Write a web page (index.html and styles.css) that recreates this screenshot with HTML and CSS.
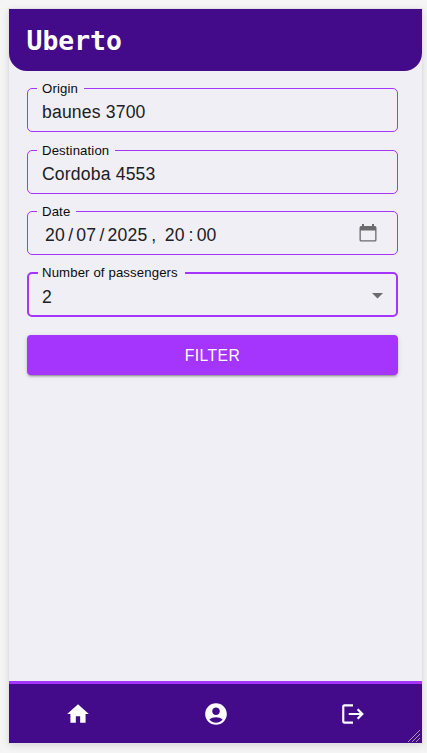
FILE: index.html
```
<!DOCTYPE html>
<html lang="en">
<head>
<meta charset="utf-8">
<title>Uberto</title>
<link rel="stylesheet" href="styles.css">
</head>
<body>
<div class="phone">
  <header class="header"><h1>Uberto</h1></header>
  <main class="form">
    <fieldset class="field"><legend>Origin</legend><div class="value">baunes 3700</div></fieldset>
    <fieldset class="field"><legend>Destination</legend><div class="value">Cordoba 4553</div></fieldset>
    <fieldset class="field">
      <legend>Date</legend>
      <div class="value date">
        <span class="parts"><span>20</span><span class="slash">/</span><span>07</span><span class="slash">/</span><span>2025</span><span class="comma">,</span><span>20</span><span class="colon">:</span><span>00</span></span>
        <svg class="calendar" width="18" height="18" viewBox="0 0 18 18"><path fill="#6b6b6e" fill-rule="evenodd" d="M3 0h2v2h8V0h2v2h1q1.500 0 1.500 2v12q0 1.500-1.500 1.500H2Q.5 17.500.5 16V4Q.5 2 2 2h1zM1.800 6.500v9.700h14.400V6.500z"/></svg>
      </div>
    </fieldset>
    <fieldset class="field focused">
      <legend>Number of passengers</legend>
      <div class="value"><span>2</span><svg class="arrow" width="11" height="6" viewBox="0 0 11 6"><path fill="#6b6b6e" d="M0 0h11L5.500 5.500z"/></svg></div>
    </fieldset>
    <button class="filter">FILTER</button>
  </main>
  <nav class="nav">
    <a><svg width="26" height="26" viewBox="0 0 24 24"><path d="M10 20v-6h4v6h5v-8h3L12 3 2 12h3v8z"/></svg></a>
    <a><svg width="26" height="26" viewBox="0 0 24 24"><path d="M12 2C6.480 2 2 6.480 2 12s4.480 10 10 10 10-4.480 10-10S17.520 2 12 2m0 4c1.930 0 3.500 1.570 3.500 3.500S13.930 13 12 13s-3.500-1.570-3.500-3.500S10.070 6 12 6m0 14c-2.030 0-4.430-.82-6.140-2.880C7.550 15.800 9.680 15 12 15s4.450.8 6.140 2.120C16.430 19.180 14.030 20 12 20"/></svg></a>
    <a><svg width="26" height="26" viewBox="0 0 24 24"><path d="m17 7-1.410 1.410L18.170 11H8v2h10.170l-2.580 2.580L17 17l5-5zM4 5h8V3H4c-1.100 0-2 .9-2 2v14c0 1.100.9 2 2 2h8v-2H4z"/></svg></a>
  </nav>
  <svg class="grip" width="14" height="14" viewBox="0 0 14 14"><path d="M1 13 13 1M5 13l8-8M9 13l4-4"/></svg>
</div>
</body>
</html>
```
FILE: styles.css
```
* { box-sizing: border-box; }
body {
  margin: 0;
  padding: 9px 5px 10px 9px;
  height: 753px;
  background: #f5f5f5;
  font-family: "Liberation Sans", Arial, sans-serif;
  overflow: hidden;
}
.phone {
  position: relative;
  display: flex;
  flex-direction: column;
  height: 734px;
  background: #f0eff5;
  box-shadow: 0 0 0 1px #e2e2e4, 0 2px 8px rgba(0, 0, 0, .15);
}
.header {
  display: flex;
  align-items: center;
  height: 62px;
  padding: 2px 18px 0 17.500px;
  background: #430b89;
  border-radius: 0 0 18px 18px;
}
.header h1 {
  margin: 0;
  color: #fff;
  font: bold 26.400px/32px "DejaVu Sans Mono", monospace;
}
.form {
  flex: 1;
  display: flex;
  flex-direction: column;
  padding: 9px 24px 0 18px;
}
.field {
  min-width: 0;
  height: 52px;
  margin: 0 0 10px;
  padding: 0 20px 0 14px;
  border: 1px solid #a535fd;
  border-radius: 5px;
  color: #202024;
}
.field legend {
  margin-left: -5px;
  padding: 0 6px 0 5px;
  color: #0b0b0c;
  font-size: 13.200px;
  line-height: 17px;
  letter-spacing: .12px;
}
.field:nth-child(2), .field:nth-child(3) { margin-bottom: 9px; }
.value {
  display: flex;
  align-items: center;
  justify-content: space-between;
  height: 30px;
  font-size: 17.600px;
  letter-spacing: .165px;
}
.parts { display: flex; padding-left: 3px; }
.slash { padding: 0 3px 0 3.300px; }
.comma { padding: 0 8.300px 0 4px; }
.colon { padding: 0 3px 0 4px; }
.calendar { margin-top: -4px; }
.field.focused {
  height: 53px;
  margin-bottom: 9px;
  border-width: 2px;
  padding: 0 13px 0 13px;
}
.focused legend {
  margin-left: -4px;
  padding: 1px 7px 0 4px;
  line-height: 16px;
}
.focused .value { padding-top: 2px; }
.arrow { margin-top: -2px; }
.filter {
  height: 40px;
  margin-top: 9px;
  padding: 1px 0 0;
  border: 0;
  border-radius: 4px;
  background: #a535fd;
  color: #fff;
  font: 15.700px "Liberation Sans", Arial, sans-serif;
  letter-spacing: .44px;
  box-shadow: 0 3px 1px -2px rgba(0, 0, 0, .2), 0 2px 2px rgba(0, 0, 0, .14), 0 1px 5px rgba(0, 0, 0, .12);
}
.nav {
  display: flex;
  height: 62px;
  border-top: 3px solid #a535fd;
  background: #430b89;
}
.nav a {
  flex: 1;
  display: flex;
  align-items: center;
  justify-content: center;
}
.nav svg { fill: #fff; }
.grip {
  position: absolute;
  right: 1px;
  bottom: 0;
  fill: none;
  stroke: #a99bad;
}
```
